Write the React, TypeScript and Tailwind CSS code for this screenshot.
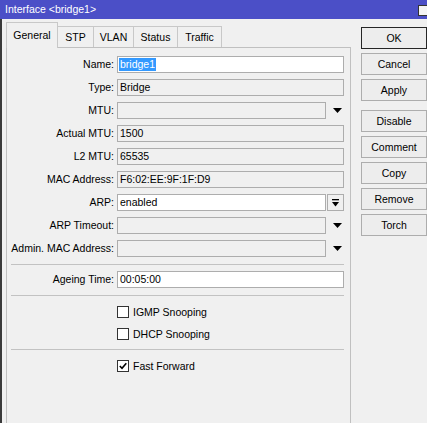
import React from 'react';

const font = "font-['Liberation_Sans',Arial,sans-serif]";

function Arrow() {
    return (
        <svg width="9" height="5" viewBox="0 0 9 5">
            <path d="M0 0 H9 L4.5 5 Z" fill="#000" />
        </svg>
    );
}

function Input({ value, editable, selected }: { value?: string; editable?: boolean; selected?: boolean }) {
    return (
        <div className={`flex h-full flex-1 items-center border border-[#adadad] pl-[1px] ${editable ? 'bg-white' : 'bg-[#f0f0f0]'}`}>
            {selected ? (
                <span className="flex h-[13px] items-center bg-[#3399ff] px-[1px] text-white">{value}</span>
            ) : (
                <span className="px-[1px]">{value}</span>
            )}
        </div>
    );
}

function Row({ label, children }: { label: string; children: React.ReactNode }) {
    return (
        <div className="flex h-[17px] items-center">
            <div className="w-[107px] text-right">{label}</div>
            <div className="ml-[3px] flex h-full w-[227px] items-center">{children}</div>
        </div>
    );
}

function DropRow({ label, value, editable }: { label: string; value?: string; editable?: boolean }) {
    return (
        <Row label={label}>
            <Input value={value} editable={editable} />
            <div className="flex w-[18px] items-center justify-center pl-[4px]">
                <Arrow />
            </div>
        </Row>
    );
}

function Check({ label, checked }: { label: string; checked?: boolean }) {
    return (
        <div className="flex h-[12px] items-center pl-[110px]">
            <div className="flex h-[12px] w-[12px] items-center justify-center border border-[#333] bg-white">
                {checked && (
                    <svg width="8" height="8" viewBox="0 0 8 8">
                        <path d="M0.8 4 L3 6.3 L7.3 1.2" stroke="#000" strokeWidth="1.6" fill="none" />
                    </svg>
                )}
            </div>
            <span className="ml-[4px]">{label}</span>
        </div>
    );
}

function Separator({ className }: { className: string }) {
    return <div className={`ml-[4px] h-px w-[333px] bg-[#c2c2c2] ${className}`} />;
}

const tabs = ['STP', 'VLAN', 'Status', 'Traffic'];
const tabWidths = ['w-[36px]', 'w-[40px]', 'w-[44px]', 'w-[44px]'];

const buttons = ['OK', 'Cancel', 'Apply', 'Disable', 'Comment', 'Copy', 'Remove', 'Torch'];

export default function App() {
    return (
        <div className={`h-[423px] w-[427px] overflow-hidden bg-[#f0f0f0] text-[10.5px] leading-none text-black ${font}`}>
            <div className="flex h-[19px] items-center bg-[#4b4fc7] pl-[5px] text-[10.5px] text-white">
                <span>Interface &lt;bridge1&gt;</span>
                <div className="ml-auto mr-[-4px] mt-[1px] h-[11px] w-[13px] border border-[#333] bg-[#f4f4f4]" />
            </div>

            <div className="flex h-[404px] border-l-2 border-[#3a3a3a]">
                <div className="ml-[4px] flex w-[346px] flex-col">
                    <div className="flex h-[28px] items-end">
                        <div className="relative z-10 -mb-px flex h-[26px] w-[52px] items-center justify-center border border-b-0 border-[#c8c8c8] bg-[#f0f0f0]">
                            General
                        </div>
                        {tabs.map((t, i) => (
                            <div key={t} className={`flex h-[21px] items-center justify-center border-t border-r border-[#c8c8c8] bg-[#f0f0f0] ${tabWidths[i]}`}>
                                {t}
                            </div>
                        ))}
                    </div>

                    <div className="flex-1 border border-b-0 border-[#c0c0c0] pt-[8px]">
                        <div className="flex flex-col gap-[6px]">
                            <Row label="Name:">
                                <Input value="bridge1" editable selected />
                            </Row>
                            <Row label="Type:">
                                <Input value="Bridge" />
                            </Row>
                            <DropRow label="MTU:" />
                            <Row label="Actual MTU:">
                                <Input value="1500" />
                            </Row>
                            <Row label="L2 MTU:">
                                <Input value="65535" />
                            </Row>
                            <Row label="MAC Address:">
                                <Input value="F6:02:EE:9F:1F:D9" />
                            </Row>
                            <Row label="ARP:">
                                <Input value="enabled" editable />
                                <div className="ml-[1px] flex h-full w-[17px] items-center justify-center border border-[#adadad] bg-[#f0f0f0]">
                                    <svg width="7" height="8" viewBox="0 0 7 8">
                                        <rect x="0" y="0" width="7" height="1.3" fill="#000" />
                                        <path d="M0 3 H7 L3.5 7.5 Z" fill="#000" />
                                    </svg>
                                </div>
                            </Row>
                            <DropRow label="ARP Timeout:" />
                            <DropRow label="Admin. MAC Address:" />
                        </div>

                        <Separator className="mt-[7px]" />
                        <div className="mt-[6px]">
                            <Row label="Ageing Time:">
                                <Input value="00:05:00" editable />
                            </Row>
                        </div>
                        <Separator className="mt-[7px]" />
                        <div className="mt-[10px]">
                            <Check label="IGMP Snooping" />
                        </div>
                        <div className="mt-[10px]">
                            <Check label="DHCP Snooping" />
                        </div>
                        <Separator className="mt-[9px]" />
                        <div className="mt-[10px]">
                            <Check label="Fast Forward" checked />
                        </div>
                    </div>
                </div>

                <div className="ml-[10px] flex flex-col gap-[4px] pt-[8px]">
                    {buttons.map((b) => (
                        <div
                            key={b}
                            className={`flex h-[22px] w-[66px] shrink-0 items-center justify-center border bg-[#ededed] ${
                                b === 'OK' ? 'border-[#262626]' : 'border-[#adadad]'
                            } ${b === 'Disable' ? 'mt-[5px]' : ''}`}
                        >
                            {b}
                        </div>
                    ))}
                </div>
            </div>
        </div>
    );
}
